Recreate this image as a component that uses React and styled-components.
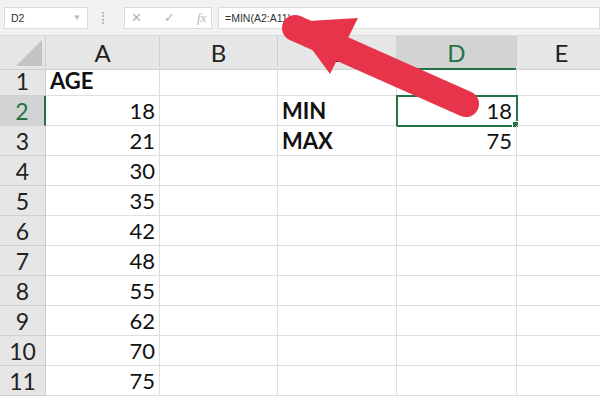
import React from 'react';
import styled, { createGlobalStyle } from 'styled-components';

const Global = createGlobalStyle`
  body { margin: 0; background: #fff; font-family: Lato, "Open Sans", sans-serif; }
`;

const Page = styled.div`
  position: relative;
  width: 600px;
  height: 400px;
  overflow: hidden;
`;

const Bar = styled.div`
  height: 36px;
  background: #f1f1f1;
  border-bottom: 1px solid #dadada;
  box-sizing: border-box;
  display: flex;
  align-items: center;
  padding: 0 0 0 4px;
  gap: 6px;
`;

const Box = styled.div`
  height: 22px;
  background: #fff;
  border: 1px solid #dcdcdc;
  box-sizing: border-box;
  display: flex;
  align-items: center;
  font-family: "Liberation Sans", sans-serif;
  font-size: 10.5px;
  color: #333;
  width: ${p => p.w || 'auto'};
  flex: ${p => p.grow ? 1 : 'none'};
  padding: 0 6px;
  gap: 22px;
  justify-content: ${p => p.between ? 'space-between' : 'flex-start'};
`;

const Dots = styled.div`
  width: 2px;
  height: 12px;
  border-left: 2px dotted #bbb;
  margin: 0 12px 0 8px;
`;

const Muted = styled.span`
  color: #b5b5b5;
  font-size: 13px;
`;

const Grid = styled.div`
  display: grid;
  grid-template-columns: 46px 114px 118px 119px 120px 90px;
  grid-auto-rows: 30px;
  &:first-child { }
`;

const Corner = styled.div`
  height: 34px;
  background: #e6e6e6;
  border-right: 1px solid #cfcfcf;
  border-bottom: 1px solid #cfcfcf;
  box-sizing: border-box;
  position: relative;
  &::after {
    content: '';
    position: absolute;
    right: 3px;
    bottom: 3px;
    border-left: 26px solid transparent;
    border-bottom: 26px solid #c3c3c3;
  }
`;

const ColHead = styled.div`
  height: 34px;
  background: ${p => (p.sel ? '#d3d3d3' : '#e6e6e6')};
  color: ${p => (p.sel ? '#217346' : '#222')};
  border-right: 1px solid #cfcfcf;
  border-bottom: ${p => (p.sel ? '2px solid #217346' : '1px solid #cfcfcf')};
  box-sizing: border-box;
  display: flex;
  align-items: center;
  justify-content: center;
  font-size: 24px;
`;

const RowHead = styled.div`
  background: ${p => (p.sel ? '#d3d3d3' : '#e6e6e6')};
  color: ${p => (p.sel ? '#217346' : '#222')};
  border-right: ${p => (p.sel ? '2px solid #217346' : '1px solid #cfcfcf')};
  border-bottom: 1px solid #cfcfcf;
  box-sizing: border-box;
  display: flex;
  align-items: center;
  justify-content: center;
  font-size: 23px;
`;

const Cell = styled.div`
  position: relative;
  border-right: 1px solid #dedede;
  border-bottom: 1px solid #dedede;
  box-sizing: border-box;
  display: flex;
  align-items: center;
  justify-content: ${p => (p.right ? 'flex-end' : 'flex-start')};
  padding: 0 4px;
  font-size: 22px;
  font-weight: ${p => (p.bold ? 700 : 400)};
  color: #111;
  ${p => p.active && `
    outline: 2px solid #217346;
    outline-offset: -1px;
    &::after {
      content: '';
      position: absolute;
      right: -3px;
      bottom: -3px;
      width: 5px;
      height: 5px;
      background: #217346;
      border: 1px solid #fff;
    }
  `}
`;

const Arrow = styled.svg`
  position: absolute;
  left: 0;
  top: 0;
`;

const ages = [18, 21, 30, 35, 42, 48, 55, 62, 70, 75];

export default function App() {
  const rows = [];
  for (let r = 1; r <= 11; r++) {
    const a = r === 1 ? 'AGE' : ages[r - 2];
    const c = r === 2 ? 'MIN' : r === 3 ? 'MAX' : '';
    const d = r === 2 ? 18 : r === 3 ? 75 : '';
    rows.push(
      <React.Fragment key={r}>
        <RowHead sel={r === 2}>{r}</RowHead>
        <Cell right={r > 1} bold={r === 1}>{a}</Cell>
        <Cell />
        <Cell bold>{c}</Cell>
        <Cell right active={r === 2}>{d}</Cell>
        <Cell />
      </React.Fragment>
    );
  }
  return (
    <Page>
      <Global />
      <Bar>
        <Box w="84px" between>D2<Muted style={{ fontSize: 8 }}>▼</Muted></Box>
        <Dots />
        <Box w="88px"><Muted>✕</Muted><Muted>✓</Muted><Muted style={{ fontStyle: 'italic', fontFamily: 'serif' }}>fx</Muted></Box>
        <Box grow>=MIN(A2:A11)</Box>
      </Bar>
      <Grid>
        <Corner />
        {['A', 'B', 'C', 'D', 'E'].map(l => (
          <ColHead key={l} sel={l === 'D'}>{l}</ColHead>
        ))}
        {rows}
      </Grid>
      <Arrow width="600" height="400">
        <line x1="295" y1="28" x2="466" y2="104" stroke="#e8344a" strokeWidth="26" strokeLinecap="round" />
        <polygon points="292,22 358,18 330,74" fill="#e8344a" />
      </Arrow>
    </Page>
  );
}
